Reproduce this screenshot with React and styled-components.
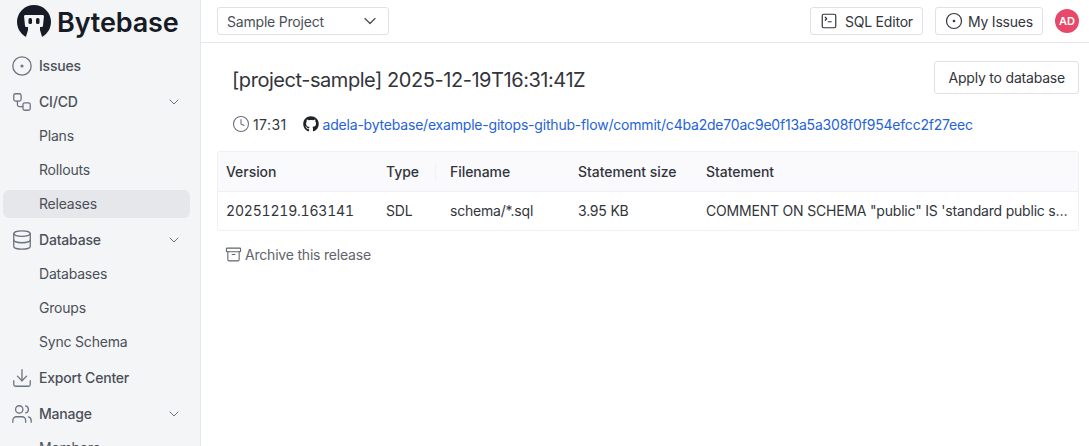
import React from 'react'
import styled, { createGlobalStyle } from 'styled-components'
import {
  Archive,
  ChevronDown,
  CircleDot,
  Clock,
  Database,
  Download,
  SquareTerminal,
  Users,
  Workflow,
} from 'lucide-react'
import { FaGithub } from 'react-icons/fa'

const GlobalStyle = createGlobalStyle`
  html, body {
    margin: 0;
    height: 100%;
    overflow: hidden;
    background: #fff;
  }
  body {
    font-family: Inter, "Liberation Sans", sans-serif;
    font-size: 14px;
    letter-spacing: -0.2px;
    color: #32353b;
  }
  * { box-sizing: border-box; }
`

const navItems = [
  { label: 'Issues', icon: CircleDot },
  {
    label: 'CI/CD',
    icon: Workflow,
    children: [{ label: 'Plans' }, { label: 'Rollouts' }, { label: 'Releases', active: true }],
  },
  {
    label: 'Database',
    icon: Database,
    children: [{ label: 'Databases' }, { label: 'Groups' }, { label: 'Sync Schema' }],
  },
  { label: 'Export Center', icon: Download },
  { label: 'Manage', icon: Users, children: [{ label: 'Members' }] },
]

const Logo = () => (
  <LogoWrap>
    <svg width="36" height="36" viewBox="0 0 36 36">
      <circle cx="18" cy="18" r="17" fill="#171b26" />
      <path
        d="M9.500 11H26.500C27.500 11 28 11.700 27.900 12.700L27 21.500C26.900 22.500 26.300 23 25.300 23H24V26L27 36H9L12 26V23H10.700C9.700 23 9.100 22.500 9 21.500L8.100 12.700C8 11.700 8.500 11 9.500 11Z"
        fill="#f4f5f7"
      />
      <rect x="12.500" y="14" width="3.500" height="6" rx="1.500" fill="#171b26" />
      <rect x="20" y="14" width="3.500" height="6" rx="1.500" fill="#171b26" />
    </svg>
    <LogoText>Bytebase</LogoText>
  </LogoWrap>
)

const NavEntry = ({ item }) => {
  const Icon = item.icon
  return (
    <>
      <NavRow>
        <NavIcon><Icon size={22} strokeWidth={1.4} /></NavIcon>
        <NavLabel>{item.label}</NavLabel>
        {item.children && <NavChevron size={16} strokeWidth={1.5} />}
      </NavRow>
      {item.children && item.children.map(child => (
        <SubRow key={child.label} $active={child.active}>{child.label}</SubRow>
      ))}
    </>
  )
}

const App = () => (
  <Page>
    <GlobalStyle />
    <Sidebar>
      <Logo />
      <Nav>
        {navItems.map(item => <NavEntry key={item.label} item={item} />)}
      </Nav>
    </Sidebar>
    <Main>
      <TopBar>
        <ProjectSelect>
          <span>Sample Project</span>
          <ChevronDown size={20} strokeWidth={1.5} />
        </ProjectSelect>
        <TopActions>
          <Button $gap={7}><SquareTerminal size={18} strokeWidth={1.6} />SQL Editor</Button>
          <Button $gap={5}><CircleDot size={18} strokeWidth={1.6} />My Issues</Button>
          <Avatar>AD</Avatar>
        </TopActions>
      </TopBar>
      <Content>
        <Header>
          <Title>[project-sample] 2025-12-19T16:31:41Z</Title>
          <ApplyButton>Apply to database</ApplyButton>
        </Header>
        <Meta>
          <MetaItem $gap={3}>
            <Clock size={18} strokeWidth={1.5} color="#6b7280" />
            <Time>17:31</Time>
          </MetaItem>
          <MetaItem $gap={4}>
            <FaGithub size={16} color="#1f2328" />
            <CommitLink>adela-bytebase/example-gitops-github-flow/commit/c4ba2de70ac9e0f13a5a308f0f954efcc2f27eec</CommitLink>
          </MetaItem>
        </Meta>
        <Table>
          <HeadRow>
            <HeadCell>Version</HeadCell>
            <HeadCell $divider>Type</HeadCell>
            <HeadCell>Filename</HeadCell>
            <HeadCell>Statement size</HeadCell>
            <HeadCell>Statement</HeadCell>
          </HeadRow>
          <BodyRow>
            <VersionCell>20251219.163141</VersionCell>
            <BodyCell>SDL</BodyCell>
            <BodyCell>schema/*.sql</BodyCell>
            <BodyCell>3.95 KB</BodyCell>
            <BodyCell>COMMENT ON SCHEMA "public" IS 'standard public schema';</BodyCell>
          </BodyRow>
        </Table>
        <ArchiveLink><Archive size={17} strokeWidth={1.5} />Archive this release</ArchiveLink>
      </Content>
    </Main>
  </Page>
)

export default App

const Page = styled.div`
  display: flex;
  width: 100%;
  height: 100vh;
  overflow: hidden;
`

const Sidebar = styled.aside`
  width: 201px;
  flex-shrink: 0;
  background: #f4f5f7;
  border-right: 1px solid #e5e7eb;
  overflow: hidden;
`

const LogoWrap = styled.div`
  display: flex;
  align-items: center;
  gap: 5px;
  height: 44px;
  padding-left: 16px;
`

const LogoText = styled.span`
  font-size: 27px;
  font-weight: 600;
  color: #171b26;
  letter-spacing: -0.15px;
`

const Nav = styled.nav`
  display: flex;
  flex-direction: column;
  padding: 4px 10px 0 3px;
`

const NavRow = styled.div`
  display: flex;
  align-items: center;
  height: 36px;
  padding: 0 8px;
  font-weight: 500;
  color: #4b5058;
`

const NavIcon = styled.span`
  display: flex;
  width: 28px;
  color: #6b7280;
`

const NavLabel = styled.span`
  margin-bottom: 2px;
`

const NavChevron = styled(ChevronDown)`
  margin-left: auto;
  color: #6b7280;
`

const SubRow = styled.div`
  display: flex;
  align-items: center;
  flex-shrink: 0;
  height: 28px;
  margin: 2px 0 4px;
  padding: 0 0 2px 36px;
  border-radius: 6px;
  color: #4b5058;
  background: ${props => (props.$active ? '#e6e7ea' : 'transparent')};
`

const Main = styled.main`
  flex: 1;
  min-width: 0;
`

const TopBar = styled.header`
  display: flex;
  align-items: center;
  justify-content: space-between;
  height: 43px;
  padding: 0 10px 0 16px;
  border-bottom: 1px solid #e5e7eb;
`

const ProjectSelect = styled.div`
  display: flex;
  align-items: center;
  justify-content: space-between;
  width: 172px;
  height: 28px;
  padding: 0 8px 0 9px;
  border: 1px solid #e0e0e6;
  border-radius: 3px;
  color: #4b5058;
`

const TopActions = styled.div`
  display: flex;
  align-items: center;
  gap: 12px;
`

const Button = styled.button`
  display: flex;
  align-items: center;
  gap: ${props => props.$gap || 6}px;
  height: 28px;
  padding: 0 9px;
  border: 1px solid #e0e0e6;
  border-radius: 3px;
  background: #fff;
  font: inherit;
  letter-spacing: inherit;
  color: #32353b;
`

const Avatar = styled.div`
  display: flex;
  align-items: center;
  justify-content: center;
  width: 24px;
  height: 24px;
  border-radius: 50%;
  background: #e8486a;
  color: #fff;
  font-size: 11px;
  font-weight: 600;
  letter-spacing: 0;
`

const Content = styled.div`
  padding: 18px 10px 0 16px;
`

const Header = styled.div`
  display: flex;
  align-items: center;
  justify-content: space-between;
  padding-left: 15px;
`

const Title = styled.h1`
  margin: 5px 0 0;
  font-size: 20px;
  font-weight: 400;
  letter-spacing: -0.45px;
  color: #32353b;
`

const ApplyButton = styled(Button)`
  height: 33px;
  padding: 0 13px;
`

const Meta = styled.div`
  display: flex;
  align-items: center;
  gap: 16px;
  height: 20px;
  margin-top: 20px;
  padding-left: 15px;
`

const MetaItem = styled.div`
  display: flex;
  align-items: center;
  gap: ${props => props.$gap}px;
`

const Time = styled.span`
  letter-spacing: 0.4px;
`

const CommitLink = styled.a`
  color: #2563d8;
`

const Table = styled.div`
  margin-top: 17px;
  border: 1px solid #efeff5;
  border-radius: 3px;
`

const gridColumns = '160px 64px 128px 128px 1fr'

const HeadRow = styled.div`
  display: grid;
  grid-template-columns: ${gridColumns};
  height: 40px;
  background: #fafafc;
  border-bottom: 1px solid #efeff5;
  font-weight: 500;
  letter-spacing: -0.05px;
`

const BodyRow = styled.div`
  display: grid;
  grid-template-columns: ${gridColumns};
  height: 38px;
`

const HeadCell = styled.div`
  position: relative;
  display: flex;
  align-items: center;
  padding: 0 8px;

  ${props => props.$divider && `
    &::after {
      content: '';
      position: absolute;
      top: 11px;
      right: 6px;
      width: 1px;
      height: 18px;
      background: #f2f2f6;
    }
  `}
`

const BodyCell = styled.div`
  padding: 0 8px;
  line-height: 38px;
  white-space: nowrap;
  overflow: hidden;
  text-overflow: ellipsis;
`

const VersionCell = styled(BodyCell)`
  font-variant-numeric: tabular-nums;
`

const ArchiveLink = styled.div`
  display: flex;
  align-items: center;
  gap: 3px;
  margin-top: 15px;
  padding-left: 8px;
  color: #5f646c;
`
